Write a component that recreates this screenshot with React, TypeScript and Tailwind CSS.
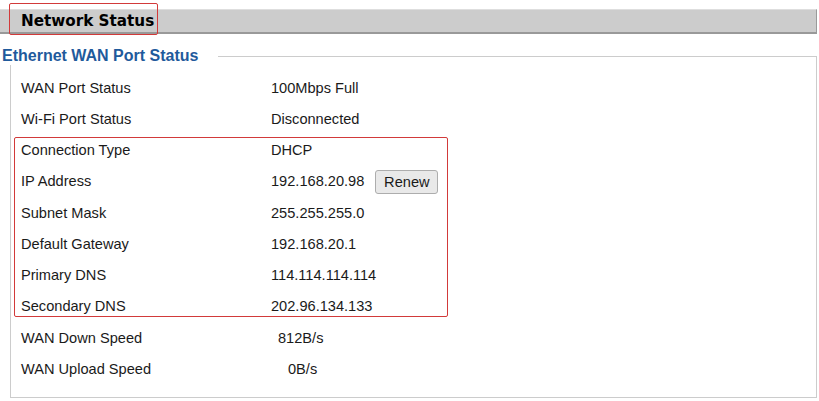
import React from 'react';

const rows: { label: string; value: string; shift?: string; renew?: boolean }[] = [
  { label: 'WAN Port Status', value: '100Mbps Full' },
  { label: 'Wi-Fi Port Status', value: 'Disconnected' },
  { label: 'Connection Type', value: 'DHCP' },
  { label: 'IP Address', value: '192.168.20.98', renew: true },
  { label: 'Subnet Mask', value: '255.255.255.0' },
  { label: 'Default Gateway', value: '192.168.20.1' },
  { label: 'Primary DNS', value: '114.114.114.114' },
  { label: 'Secondary DNS', value: '202.96.134.133' },
  { label: 'WAN Down Speed', value: '812B/s', shift: 'ml-[7px]' },
  { label: 'WAN Upload Speed', value: '0B/s', shift: 'ml-[17px]' },
];

export default function App() {
  return (
    <div className="relative w-[819px] h-[401px] bg-white overflow-hidden font-['Liberation_Sans',Arial,sans-serif] text-[14.6px] text-[#1a1a1a]">
      {/* page title bar */}
      <div className="pt-[9px]">
        <div className="w-[817px] h-[25px] bg-[#cccccc] border-t border-t-[#dedede] border-b-2 border-b-[#999999] border-r border-r-[#9a9a9a] pl-[21px]">
          <span className="block leading-[22px] font-['DejaVu_Sans',Verdana,sans-serif] font-bold text-[15.2px] text-black">
            Network Status
          </span>
        </div>
      </div>

      <fieldset className="mt-[13px] ml-[10px] w-[807px] h-[351px] border border-[#cccccc] p-0 m-0">
        <legend className="-ml-[9px] pr-[20px] pl-0 h-[18px] leading-[18px] font-bold text-[16px] text-[#1f5a9c]">
          Ethernet WAN Port Status
        </legend>
        <div className="pt-[8px] pl-[10px]">
          {rows.map(r => (
            <div key={r.label} className="flex items-center h-[31.25px]">
              <span className="w-[250px] shrink-0">{r.label}</span>
              <span className={r.shift}>{r.value}</span>
              {r.renew && (
                <button className="ml-[11px] w-[63px] h-[24px] rounded-[3px] border border-[#adadad] bg-[#e9e9e9] text-[14.6px] leading-none text-[#1a1a1a]">
                  Renew
                </button>
              )}
            </div>
          ))}
        </div>
      </fieldset>

      {/* red highlight annotations */}
      <div className="absolute left-[9px] top-[3px] w-[149px] h-[32px] border border-[#d23a3a] rounded-[2px]" />
      <div className="absolute left-[14px] top-[137px] w-[434px] h-[180px] border border-[#d23a3a] rounded-[2px]" />
    </div>
  );
}
